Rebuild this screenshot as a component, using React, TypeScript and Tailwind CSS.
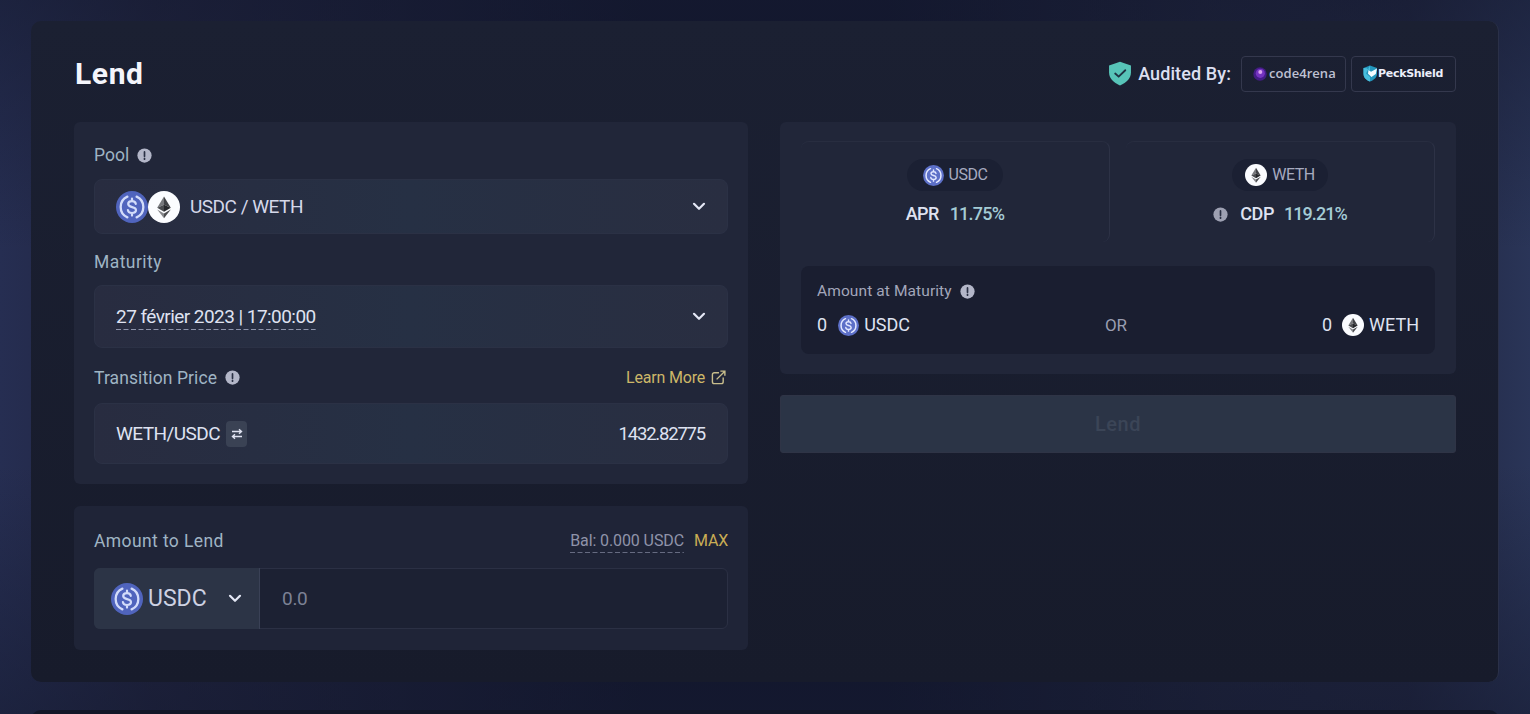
import { ReactNode } from "react";
import clsx from "clsx";

function UsdcIcon({ className, pale }: { className?: string; pale?: boolean }) {
  return (
    <svg viewBox="0 0 32 32" className={clsx("shrink-0", className)} aria-hidden="true">
      <circle cx="16" cy="16" r="16" fill={pale ? "#5d70c8" : "#5064bd"} />
      <g fill="none" stroke={pale ? "#e3e8ff" : "#d3dcfa"} strokeLinecap="round">
        <path d="M11.4 5.6a11.4 11.4 0 0 0 0 20.8M20.6 5.600a11.4 11.4 0 0 1 0 20.8" strokeWidth="2.3" />
        <path
          d="M19.8 12.9c-.3-1.8-1.8-2.7-3.8-2.7-2.3 0-3.8 1.1-3.8 2.9 0 4.1 7.8 1.9 7.8 6 0 1.8-1.7 2.9-4 2.9-2.4 0-3.9-1.1-4.1-3M16 7.6v2.4M16 22.2v2.4"
          strokeWidth="2.2"
        />
      </g>
    </svg>
  );
}

function EthIcon({ className }: { className?: string }) {
  return (
    <svg viewBox="0 0 32 32" className={clsx("shrink-0", className)} aria-hidden="true">
      <circle cx="16" cy="16" r="16" fill="#fbfcff" />
      <path d="M16 5.5 9.2 16.8 16 13.8z" fill="#77787c" />
      <path d="M16 5.5 22.8 16.8 16 13.8z" fill="#414246" />
      <path d="M9.2 16.8 16 13.8v7z" fill="#4a4b4f" />
      <path d="M22.8 16.8 16 13.8v7z" fill="#26272b" />
      <path d="M9.2 18.4 16 22.4v4.9z" fill="#85868a" />
      <path d="M22.8 18.4 16 22.4v4.9z" fill="#4a4b4f" />
    </svg>
  );
}

function InfoIcon({ className }: { className?: string }) {
  return (
    <svg viewBox="0 0 16 16" className={clsx("size-[15px] shrink-0", className)} aria-hidden="true">
      <circle cx="8" cy="8" r="7.6" fill="#b3b6c8" />
      <path d="M8 4.2v4.6M8 10.9v1" stroke="#2a3044" strokeWidth="1.8" strokeLinecap="round" />
    </svg>
  );
}

function Chevron({ className }: { className?: string }) {
  return (
    <svg viewBox="0 0 14 9" className={clsx("h-[9px] w-[14px] shrink-0", className)} aria-hidden="true">
      <path d="M2 1.8 7 6.8l5-5" fill="none" stroke="#e4e7f5" strokeWidth="2.2" strokeLinecap="round" strokeLinejoin="round" />
    </svg>
  );
}

function ShieldCheck() {
  return (
    <svg viewBox="0 0 24 26" className="mb-0.5 h-[25px] w-6 shrink-0" aria-hidden="true">
      <path d="M12 .8 23.4 4.6v7.2c0 6.4-4.4 10.6-11.4 13.6C5 22.4.6 18.2.6 11.8V4.6z" fill="#57c4b8" />
      <path d="m7 13 3.6 3.3 6.9-6.7" fill="none" stroke="#1e3242" strokeWidth="1.9" strokeLinecap="round" strokeLinejoin="round" />
    </svg>
  );
}

function PeckShieldMark() {
  return (
    <svg viewBox="0 0 15 17" className="-mt-px h-[17px] w-[15px] shrink-0" aria-hidden="true">
      <path d="M7 .5 14 3v5.5c0 4-3 6.5-7 8-4-1.5-6.5-4-6.5-8V3z" fill="#2396bd" />
      <path d="M7 .5v5L3.5 3.2.5 3v5.5c0 4 2.5 6.5 6.5 8V12L3 8.5z" fill="#48bddc" />
      <path d="M5.500 5 8 6.800 14 3.500 12.800 9 8.500 12 5 8.800z" fill="#f4fbff" />
    </svg>
  );
}

function Code4renaMark() {
  return (
    <svg viewBox="0 0 14 14" className="size-[14px] shrink-0" aria-hidden="true">
      <circle cx="7" cy="7" r="6.7" fill="#431c85" />
      <circle cx="7.3" cy="6.3" r="4.6" fill="#7433bf" />
      <circle cx="7.3" cy="5" r="2" fill="#d9a3ee" />
    </svg>
  );
}

function DashedLine({ className }: { className?: string }) {
  return (
    <svg className={clsx("h-px w-0 min-w-full shrink-0", className)} aria-hidden="true">
      <line x1="0" y1=".5" x2="100%" y2=".5" stroke="currentColor" strokeDasharray="5 2.5" />
    </svg>
  );
}

function AuditBadge({ children }: { children: ReactNode }) {
  return (
    <div className="flex h-9 w-[105px] items-center rounded-[4px] border border-[#34384d] pl-[11px]">
      {children}
    </div>
  );
}

const card = "rounded-md px-5 pt-[21px]";
const label = "text-[17.5px] leading-6 text-[#9fb4c4]";
const field =
  "flex items-center rounded-lg border border-[#2b3145] bg-linear-to-r from-[#282c40] via-[#263044] to-[#292e41] px-[21px]";

function Header() {
  return (
    <header className="flex h-9 items-center justify-between">
      <h1 className="pl-px text-[30px] leading-9 font-bold tracking-[0.6px] text-[#f4f5fc]">Lend</h1>
      <div className="flex items-center">
        <ShieldCheck />
        <span className="mr-2.5 mb-px ml-1.5 text-[18px] font-medium tracking-[0.1px] text-[#dcdff0]">
          Audited By:
        </span>
        <div className="flex gap-[5px]">
          <AuditBadge>
            <Code4renaMark />
            <span className="ml-0.5 font-['Open_Sans'] text-[13px] font-semibold tracking-[0.05px] text-[#bfc1d3]">
              code4rena
            </span>
          </AuditBadge>
          <AuditBadge>
            <PeckShieldMark />
            <span className="font-['DejaVu_Sans'] text-[11px] font-bold tracking-[-0.3px] text-[#eceefa]">
              PeckShield
            </span>
          </AuditBadge>
        </div>
      </div>
    </header>
  );
}

function PoolCard() {
  return (
    <section className={clsx(card, "h-[362px] bg-[#212639]")}>
      <div className="flex items-center gap-2">
        <span className={label}>Pool</span>
        <InfoIcon />
      </div>
      <div className={clsx(field, "mt-3 h-[55px]")}>
        <UsdcIcon className="size-8" />
        <EthIcon className="size-8" />
        <span className="ml-2.5 pt-px text-[19px] tracking-[-0.5px] text-[#d5d8ea]">USDC / WETH</span>
        <Chevron className="ml-auto" />
      </div>

      <div className={clsx(label, "mt-4 tracking-[0.45px]")}>Maturity</div>
      <div className={clsx(field, "mt-[11px] h-[63px]")}>
        <span className="flex flex-col pt-px text-[19px] leading-6 tracking-[-0.55px] text-[#dfe2f1]">
          27 février 2023 | 17:00:00
          <DashedLine className="text-[#8d93aa]" />
        </span>
        <Chevron className="ml-auto" />
      </div>

      <div className="mt-[17px] flex items-center">
        <span className={clsx(label, "tracking-[0.1px]")}>Transition Price</span>
        <InfoIcon className="ml-2" />
        <a href="#" className="mr-0.5 ml-auto flex items-center gap-1.5 text-[16px] leading-6 tracking-[-0.2px] text-[#cdb768]">
          <span className="pt-px">Learn More</span>
          <svg viewBox="0 0 16 16" className="size-[15px]" fill="none" stroke="#c8bd8c" strokeWidth="1.5" aria-hidden="true">
            <path d="M8.5 3h-5a2 2 0 0 0-2 2v7.5a2 2 0 0 0 2 2H11a2 2 0 0 0 2-2V8M6 10l8.5-8.5M10 1.2h4.8V6" />
          </svg>
        </a>
      </div>
      <div className={clsx(field, "mt-[13px] h-[61px] text-[19px] text-[#dfe2f1]")}>
        <span className="pt-0.5 tracking-[-0.55px]">WETH/USDC</span>
        <button className="ml-1.5 flex h-[26px] w-[21px] items-center justify-center rounded-[4px] bg-[#3a4254]" aria-label="Swap">
          <svg viewBox="0 0 12 12" className="size-3" fill="none" stroke="#dfe2f1" strokeWidth="1.4" aria-hidden="true">
            <path d="M1 3.500h9M8 1.300l2.500 2.200L8 5.700M11 8.500H2M4 6.300 1.500 8.500 4 10.700" />
          </svg>
        </button>
        <span className="mr-px ml-auto pt-0.5 text-[18.5px] tracking-[-1.2px]">1432.82775</span>
      </div>
    </section>
  );
}

function AmountCard() {
  return (
    <section className={clsx(card, "mt-[22px] h-36 bg-[#1f2437]")}>
      <div className="flex items-center">
        <span className={clsx(label, "pt-px tracking-[0.4px]")}>Amount to Lend</span>
        <span className="mt-[3px] ml-auto flex flex-col text-[16px] leading-[22px] tracking-[-0.1px] text-[#8f93a9]">
          Bal: 0.000 USDC
          <DashedLine className="text-[#666b81]" />
        </span>
        <span className="ml-2.5 pt-0.5 text-[16px] leading-6 tracking-[-0.2px] text-[#c9ad54]">MAX</span>
      </div>
      <div className="mt-[15px] flex h-[61px] rounded-md border border-[#2b3044] bg-[#1c2133]">
        <button className="-my-px -ml-px flex w-[166px] items-center rounded-l-md border-r border-[#3a4156] bg-[#2c3446] px-[17px]">
          <UsdcIcon className="size-8" />
          <span className="ml-[5px] pt-px text-[23px] text-[#cdd1e2]">USDC</span>
          <Chevron className="ml-auto" />
        </button>
        <input
          className="ml-[22px] min-w-0 flex-1 bg-transparent pt-px text-[19px] tracking-[-0.3px] outline-none placeholder:text-[#7d8195]"
          placeholder="0.0"
        />
      </div>
    </section>
  );
}

function TokenPill({ icon, name }: { icon: ReactNode; name: string }) {
  return (
    <div className="flex h-8 w-24 items-center justify-center gap-[5px] rounded-full bg-[#1b2033] text-[16px] tracking-[-0.5px] text-[#a7abc0]">
      {icon}
      {name}
    </div>
  );
}

function SummaryCard() {
  return (
    <section className="h-[252px] rounded-md bg-[#212639] px-[21px] pt-[19px]">
      <div className="flex h-[101px] gap-4">
        <div className="flex flex-1 flex-col items-center rounded-lg border-t border-r border-t-[#282d40] border-r-[#2d3246] pt-[17px]">
          <TokenPill icon={<UsdcIcon pale className="size-[21px]" />} name="USDC" />
          <div className="mt-[11px] flex gap-[11px] text-[18px] leading-6 font-medium">
            <span className="tracking-[-0.6px] text-[#dfe2f1]">APR</span>
            <span className="tracking-[-0.75px] text-[#a4cbd5]">11.75%</span>
          </div>
        </div>
        <div className="flex flex-1 flex-col items-center rounded-lg border-t border-r border-t-[#282d40] border-r-[#2d3246] pt-[17px]">
          <TokenPill icon={<EthIcon className="size-[22px]" />} name="WETH" />
          <div className="mt-[11px] flex items-center text-[18px] leading-6 font-medium">
            <InfoIcon className="opacity-85" />
            <span className="ml-3 tracking-[-0.4px] text-[#dfe2f1]">CDP</span>
            <span className="ml-2.5 tracking-[-0.95px] text-[#a4cbd5]">119.21%</span>
          </div>
        </div>
      </div>

      <div className="mt-6 h-[88px] rounded-lg bg-[#1a1e30] px-4 pt-[13px]">
        <div className="flex items-center gap-2 text-[15.5px] leading-6 tracking-[0.1px] text-[#a3a6ba]">
          Amount at Maturity
          <InfoIcon />
        </div>
        <div className="mt-2.5 flex items-center justify-between text-[18px] leading-6 text-[#dfe2f1]">
          <div className="flex items-center">
            0
            <UsdcIcon pale className="mr-[5px] ml-[11px] size-[21px]" />
            USDC
          </div>
          <span className="text-[17px] tracking-[-0.2px] text-[#999db1]">OR</span>
          <div className="flex items-center">
            0
            <EthIcon className="mr-[5px] ml-2.5 size-[22px]" />
            WETH
          </div>
        </div>
      </div>
    </section>
  );
}

export default function App() {
  return (
    <div className="h-[714px] w-[1530px] overflow-hidden bg-[linear-gradient(to_bottom,rgba(22,27,50,0.6),transparent_35%,transparent_65%,rgba(22,27,50,0.6)),linear-gradient(to_right,#262e52,#20233e_10%,#10142a_42%,#10142a_58%,#1e233b_80%,#20253f_92%,#2a3558)] px-[31px] pt-[21px] font-[Roboto,sans-serif]">
      <main className="h-[661px] rounded-[10px] border-r border-[#2a3048] bg-linear-to-b from-[#1b2032] to-[#171b2b] pt-[35px] pr-[42px] pl-[43px]">
        <Header />
        <div className="mt-[30px] grid grid-cols-[674px_676px] items-start gap-8">
          <div>
            <PoolCard />
            <AmountCard />
          </div>
          <div>
            <SummaryCard />
            <button
              disabled
              className="mt-[21px] h-[58px] w-full rounded-[3px] border border-[#2f3446] bg-[#2b3446] text-[20px] font-medium tracking-[0.5px] text-[#3b4557]"
            >
              Lend
            </button>
          </div>
        </div>
      </main>
      {/* top edge of the next panel */}
      <div className="mt-7 h-10 rounded-t-[10px] bg-[#131728]" />
    </div>
  );
}
